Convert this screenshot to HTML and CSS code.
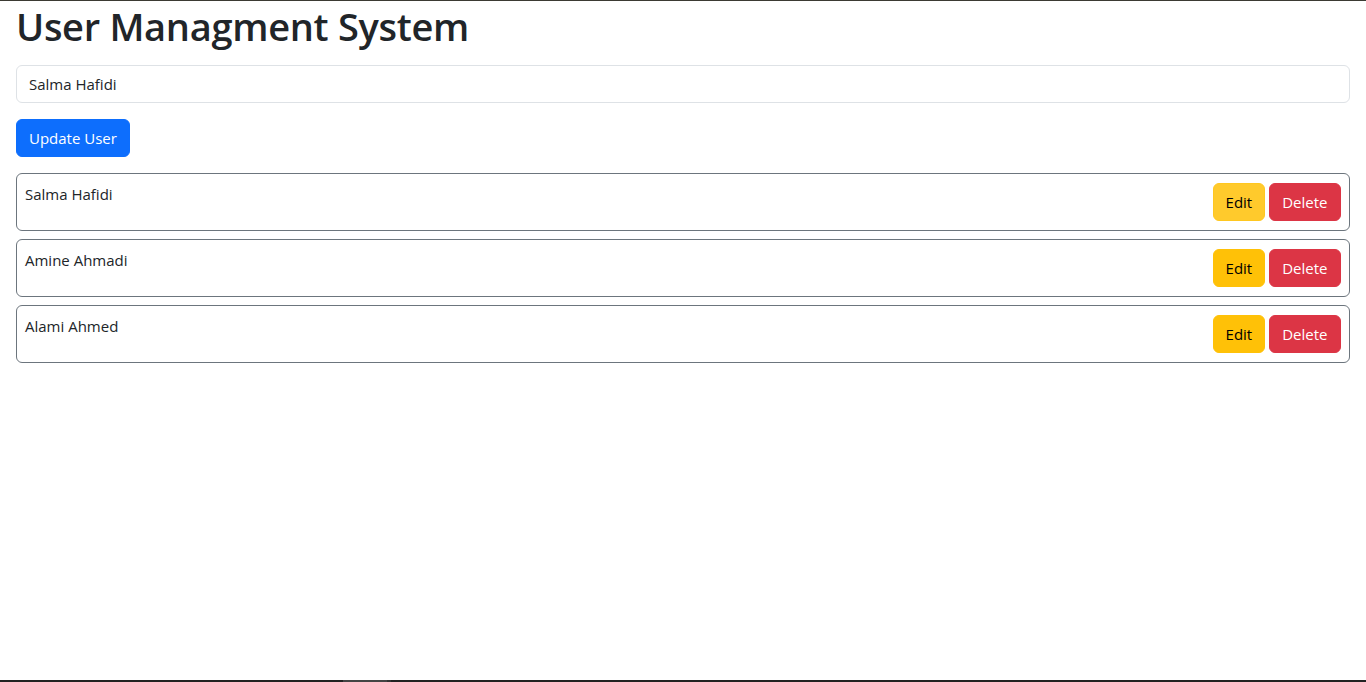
FILE: index.html
```html
<!DOCTYPE html>
<html lang="en">
<head>
<meta charset="utf-8">
<title>User Managment System</title>
<link rel="stylesheet" href="styles.css">
</head>
<body>
<div class="frame">
  <div class="container">
    <h1 class="title">User Managment System</h1>
    <input class="field" type="text" value="Salma Hafidi">
    <button class="btn btn-primary">Update User</button>
    <ul class="users">
      <li class="user">
        <span class="name">Salma Hafidi</span>
        <div class="actions">
          <button class="btn btn-warning hover">Edit</button>
          <button class="btn btn-danger">Delete</button>
        </div>
      </li>
      <li class="user">
        <span class="name">Amine Ahmadi</span>
        <div class="actions">
          <button class="btn btn-warning">Edit</button>
          <button class="btn btn-danger">Delete</button>
        </div>
      </li>
      <li class="user">
        <span class="name">Alami Ahmed</span>
        <div class="actions">
          <button class="btn btn-warning">Edit</button>
          <button class="btn btn-danger">Delete</button>
        </div>
      </li>
    </ul>
  </div>
  <div class="bottombar"><span class="thumb"></span><span class="thumb-edge"></span></div>
</div>
</body>
</html>
```

FILE: styles.css
```css
* { box-sizing: border-box; }
html, body { margin: 0; padding: 0; }
body {
  font-family: "Open Sans", "Noto Sans", sans-serif;
  font-size: 16px;
  line-height: 24px;
  color: #212529;
  background: #fff;
}
.frame {
  height: 682px;
  display: flex;
  flex-direction: column;
  border-top: 1px solid #3b3a33;
}
.container {
  flex: 1;
  padding: 0 16px;
  display: flex;
  flex-direction: column;
  align-items: flex-start;
}
.title {
  margin: 2px 0 16px;
  font-size: 38px;
  line-height: 46px;
  font-weight: 600;
  letter-spacing: -0.3px;
}
.field {
  width: 100%;
  height: 38px;
  padding: 6px 12px;
  border: 1px solid #dee2e6;
  border-radius: 6px;
  font: inherit;
  font-size: 15px;
  color: #212529;
  margin: 0 0 16px;
  outline: none;
}
.btn {
  font: inherit;
  font-size: 15px;
  height: 38px;
  padding: 6px 12px;
  border: 1px solid transparent;
  border-radius: 6px;
  line-height: 24px;
  cursor: pointer;
}
.btn-primary { background: #0d6efd; border-color: #0d6efd; color: #fff; }
.btn-warning { background: #ffc107; border-color: #ffc107; color: #000; padding: 6px 11.5px; }
.btn-warning.hover { background: #ffca2c; border-color: #ffc720; }
.btn-danger { background: #dc3545; border-color: #dc3545; color: #fff; padding: 6px 12.5px; }
.users {
  list-style: none;
  margin: 16px 0 0;
  padding: 0;
  width: 100%;
  display: flex;
  flex-direction: column;
  gap: 8px;
}
.user {
  display: flex;
  justify-content: space-between;
  align-items: flex-start;
  border: 1px solid #6c757d;
  border-radius: 6px;
  padding: 8px;
  min-height: 58px;
}
.name { font-size: 15px; }
.actions {
  display: flex;
  gap: 4px;
  align-self: center;
}
.bottombar {
  height: 2px;
  background: #222;
  display: flex;
}
.thumb { margin-left: 343px; width: 44px; background: #444; }
.thumb-edge { width: 4px; background: #333; }
```
